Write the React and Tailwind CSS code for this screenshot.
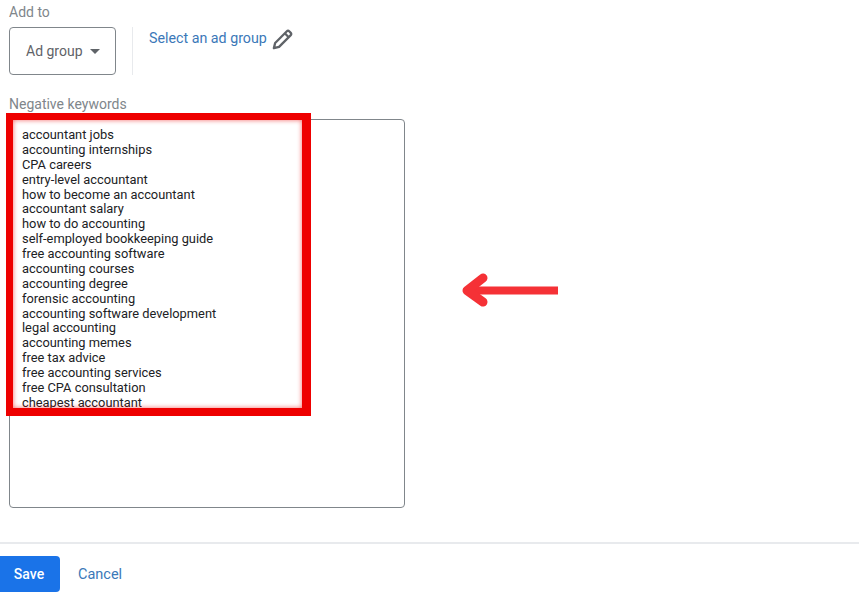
const keywords = [
  "accountant jobs",
  "accounting internships",
  "CPA careers",
  "entry-level accountant",
  "how to become an accountant",
  "accountant salary",
  "how to do accounting",
  "self-employed bookkeeping guide",
  "free accounting software",
  "accounting courses",
  "accounting degree",
  "forensic accounting",
  "accounting software development",
  "legal accounting",
  "accounting memes",
  "free tax advice",
  "free accounting services",
  "free CPA consultation",
  "cheapest accountant",
];

export default function App() {
  return (
    <div className="relative h-[605px] w-[859px] overflow-hidden bg-white font-['Roboto',sans-serif]">
      <div className="pl-[9px] pt-[4px]">
        <div className="text-[14px] leading-[16px] text-[#80868b]">Add to</div>
        <div className="mt-[7px] flex h-[48px] items-start">
          <div className="flex h-[48px] w-[107px] items-center rounded-[4px] border border-[#80868b] pl-[16px]">
            <span className="text-[14px] text-[#5f6368]">Ad group</span>
            <span className="ml-[7px] h-0 w-0 border-x-[5.5px] border-t-[5px] border-x-transparent border-t-[#5f6368]" />
          </div>
          <div className="ml-[16px] h-[48px] w-px bg-[#e8eaed]" />
          <div className="ml-[16px] flex items-center pt-[1px]">
            <span className="text-[14.25px] leading-[20px] text-[#3b78b8]">Select an ad group</span>
            <svg className="ml-[4px] -mt-[1px] -mb-[3px]" width="23" height="23" viewBox="0 0 20 20" fill="none" stroke="#5f6368" strokeWidth="2" strokeLinejoin="round">
              <path d="M2.5 17.5 L3.6 13 L13.8 2.8 a1.4 1.4 0 0 1 2 0 L17.2 4.2 a1.4 1.4 0 0 1 0 2 L7 16.4 Z" />
              <path d="M12 4.6 L15.4 8" />
            </svg>
          </div>
        </div>
        <div className="mt-[21px] text-[14px] leading-[16px] text-[#80868b]">Negative keywords</div>
        <div className="mt-[7px] h-[389px] w-[396px] rounded-[4px] border border-[#80868b] pl-[12px] pt-[8px]">
          {keywords.map((k) => (
            <div key={k} className="text-[12.85px] leading-[14.87px] text-[#202124]">{k}</div>
          ))}
        </div>
      </div>

      <div className="mt-[34px] h-[1.5px] bg-[#e8eaed]" />
      <div className="mt-[12.5px] flex items-center">
        <button className="h-[36px] w-[60px] rounded-r-[4px] bg-[#1a73e8] pr-[2px] text-[14px] font-medium text-white">Save</button>
        <span className="ml-[18px] mt-[1px] text-[14.5px] text-[#3b78b8]">Cancel</span>
      </div>

      <div className="pointer-events-none absolute left-[6px] top-[113px] h-[303px] w-[305px] border-t-[7px] border-r-[9px] border-b-[8px] border-l-[7px] border-[#ee0000] shadow-[inset_0_0_5px_#ee000099]" />

      <svg className="absolute left-[460px] top-[270px]" width="102" height="40" viewBox="0 0 102 40" fill="none" stroke="#f53136" strokeLinecap="round" strokeLinejoin="round">
        <path d="M8 20.5 H98" strokeWidth="8" strokeLinecap="butt" />
        <path d="M23 8 L7 20.5 L23 32" strokeWidth="9" />
      </svg>
    </div>
  );
}
